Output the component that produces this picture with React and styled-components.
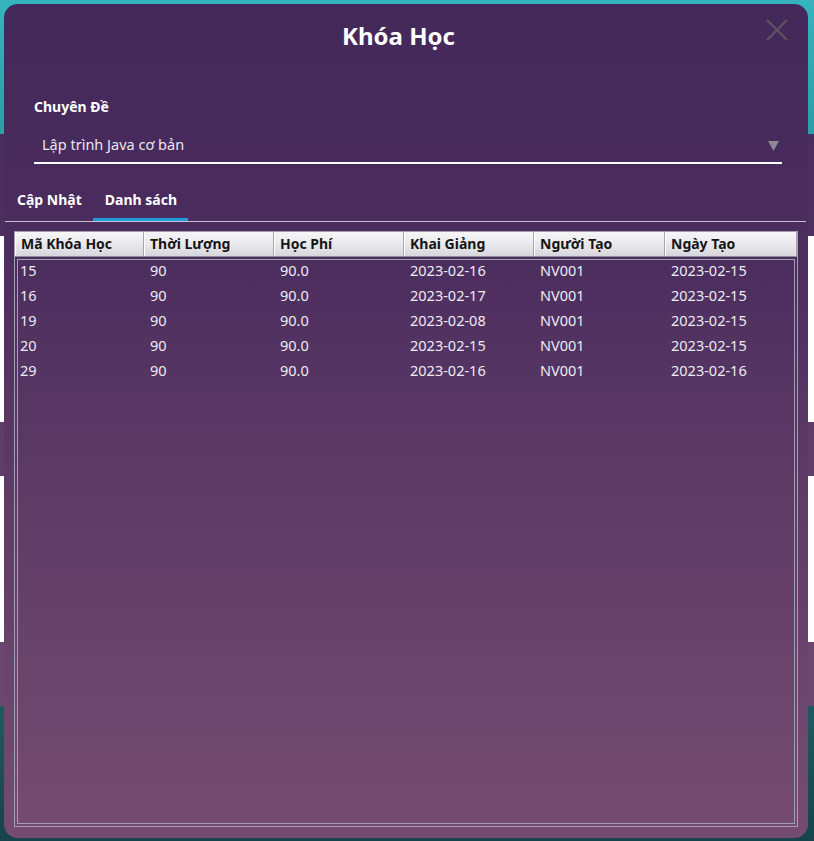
import styled, { createGlobalStyle } from "styled-components";
import React from "react";

const GlobalStyle = createGlobalStyle`
    body {
        margin: 0;
        font-family: "Noto Sans", "Open Sans", sans-serif;
    }
`;

const Backdrop = styled.div`
    width: 814px;
    height: 841px;
    box-sizing: border-box;
    padding: 4px 6px 3px 4px;
    display: flex;
    background: linear-gradient(
        to bottom,
        #35b4bd 0,
        #2b9ea6 134px,
        #4a2d5e 134px,
        #4d3060 236px,
        #ffffff 236px,
        #ffffff 422px,
        #5e3d66 422px,
        #603f67 476px,
        #ffffff 476px,
        #ffffff 642px,
        #6a4670 642px,
        #6c4870 706px,
        #1f5a61 706px,
        #16444a 841px
    );
`;

const Dialog = styled.div`
    flex: 1;
    position: relative;
    display: flex;
    flex-direction: column;
    border-radius: 14px;
    background: linear-gradient(to bottom, #43285a 0%, #4b2d5e 30%, #5e3c66 60%, #754c70 100%);
    color: #ffffff;
`;

const Title = styled.div`
    margin-top: 18px;
    padding-right: 15px;
    height: 28px;
    line-height: 28px;
    text-align: center;
    font-size: 24px;
    font-weight: 700;
`;

const CloseButton = styled.div`
    position: absolute;
    top: 15px;
    right: 20px;
    width: 22px;
    height: 22px;
    display: flex;
`;

const FieldLabel = styled.div`
    margin: 47px 0 0 30px;
    line-height: 20px;
    font-size: 14px;
    font-weight: 700;
`;

const Combo = styled.div`
    margin: 0 26px 0 30px;
    padding: 17px 3px 8px 8px;
    display: flex;
    align-items: center;
    justify-content: space-between;
    border-bottom: 2px solid #ffffff;
`;

const ComboText = styled.span`
    line-height: 20px;
    font-size: 14.5px;
    color: #ece6f0;
`;

const Caret = styled.svg`
    width: 11px;
    height: 10px;
    margin-top: 4px;
`;

const TabBar = styled.div`
    margin: 0 2px 0 1px;
    display: flex;
    border-bottom: 1px solid #c9bfd3;
`;

const Tab = styled.div`
    padding: 26px 11px 8px 12px;
    line-height: 20px;
    font-size: 14px;
    font-weight: 700;
    border-bottom: 3px solid ${(p) => (p.$active ? "#1f9bd8" : "transparent")};
`;

const Content = styled.div`
    flex: 1;
    display: flex;
    padding: 9px 10px 11px 10px;
`;

const Pane = styled.div`
    flex: 1;
    display: flex;
    flex-direction: column;
    border: 1px solid #a59eb3;
`;

const HeaderRow = styled.div`
    display: grid;
    grid-template-columns: 129px 130px 130px 130px 131px 1fr;
    height: 25px;
    box-sizing: border-box;
    border-bottom: 1px solid #8e8c98;
    background: linear-gradient(to bottom, #f6f6f8 0%, #e9e9ed 50%, #d6d6dc 100%);
`;

const HeaderCell = styled.div`
    padding-left: 6px;
    line-height: 24px;
    font-size: 14px;
    font-weight: 700;
    color: #151515;
    border-right: 1px solid #a6a6ae;
    box-shadow: inset 1px 0 0 #ffffff;
`;

const Viewport = styled.div`
    flex: 1;
    padding: 2px;
    display: flex;
`;

const Body = styled.div`
    flex: 1;
    border: 1px solid #a59eb3;
`;

const Row = styled.div`
    display: grid;
    grid-template-columns: 126px 130px 130px 130px 131px 1fr;
    height: 25px;
`;

const Cell = styled.div`
    padding: 1px 0 0 6px;
    line-height: 19px;
    font-size: 14.5px;
    color: #efebf2;

    &:first-child {
        padding-left: 2px;
    }
`;

const columns = ["Mã Khóa Học", "Thời Lượng", "Học Phí", "Khai Giảng", "Người Tạo", "Ngày Tạo"];

const rows = [
    ["15", "90", "90.0", "2023-02-16", "NV001", "2023-02-15"],
    ["16", "90", "90.0", "2023-02-17", "NV001", "2023-02-15"],
    ["19", "90", "90.0", "2023-02-08", "NV001", "2023-02-15"],
    ["20", "90", "90.0", "2023-02-15", "NV001", "2023-02-15"],
    ["29", "90", "90.0", "2023-02-16", "NV001", "2023-02-16"],
];

export default function App() {
    return (
        <Backdrop>
            <GlobalStyle />
            <Dialog>
                <Title>Khóa Học</Title>
                <CloseButton>
                    <svg width="22" height="22" viewBox="0 0 22 22">
                        <path d="M1 1 L21 21 M21 1 L1 21" stroke="#5b5364" strokeWidth="2.4" />
                    </svg>
                </CloseButton>

                <FieldLabel>Chuyên Đề</FieldLabel>
                <Combo>
                    <ComboText>Lập trình Java cơ bản</ComboText>
                    <Caret viewBox="0 0 11 10">
                        <polygon points="0,0 11,0 5.5,10" fill="#8d8797" />
                    </Caret>
                </Combo>

                <TabBar>
                    <Tab>Cập Nhật</Tab>
                    <Tab $active>Danh sách</Tab>
                </TabBar>

                <Content>
                    <Pane>
                        <HeaderRow>
                            {columns.map((c) => (
                                <HeaderCell key={c}>{c}</HeaderCell>
                            ))}
                        </HeaderRow>
                        <Viewport>
                            <Body>
                                {rows.map((r, i) => (
                                    <Row key={i}>
                                        {r.map((v, j) => (
                                            <Cell key={j}>{v}</Cell>
                                        ))}
                                    </Row>
                                ))}
                            </Body>
                        </Viewport>
                    </Pane>
                </Content>
            </Dialog>
        </Backdrop>
    );
}
